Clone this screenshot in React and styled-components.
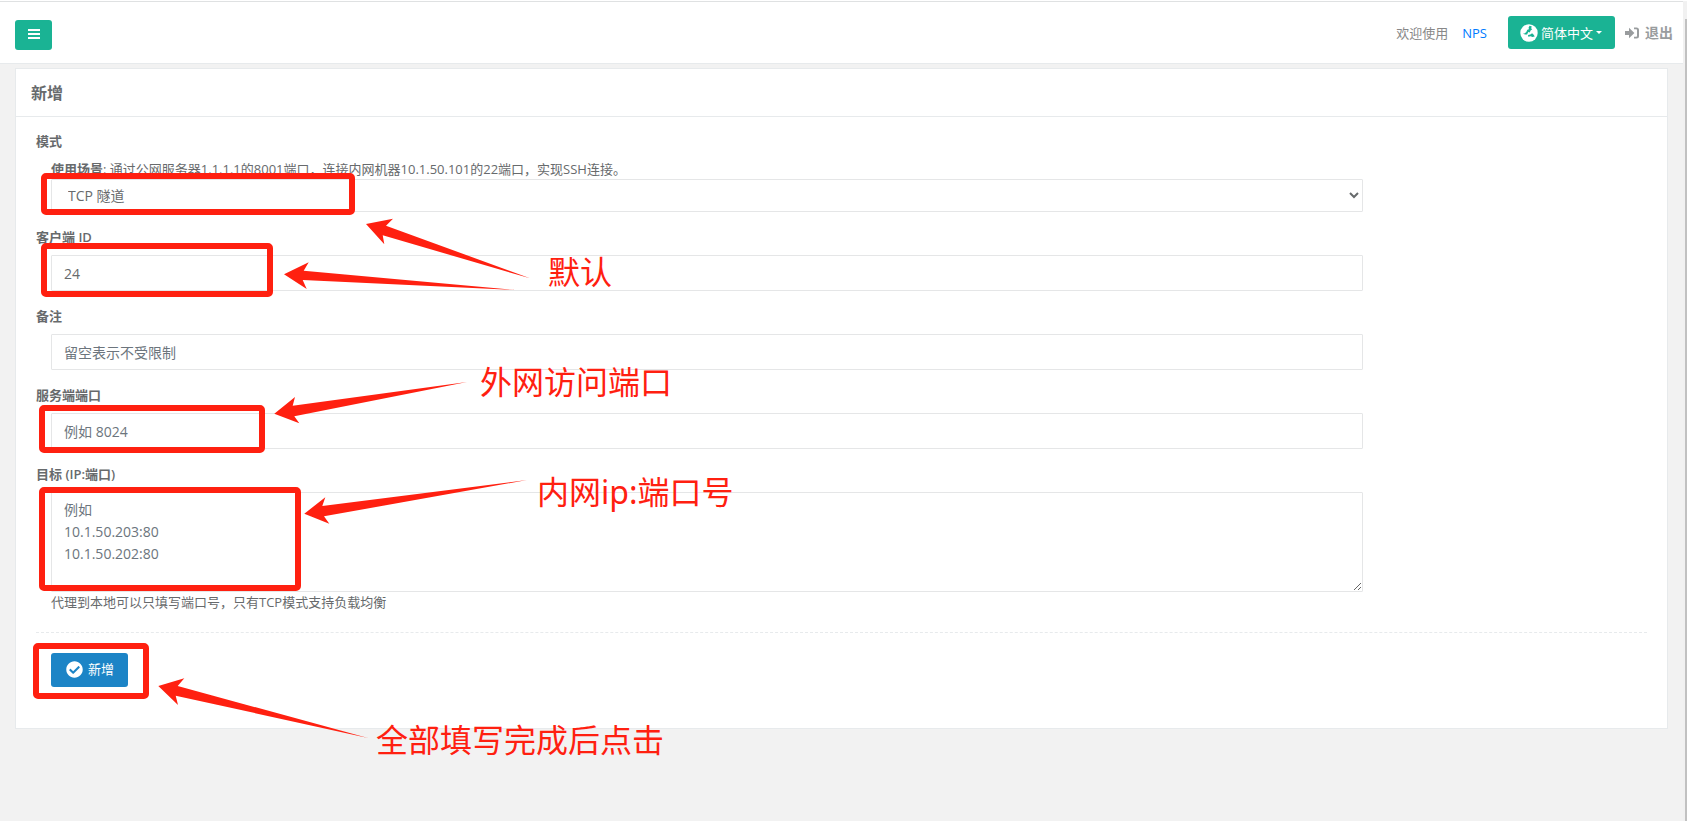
import React from 'react';
import styled, { createGlobalStyle } from 'styled-components';
import { FaCheckCircle } from 'react-icons/fa';

const Global = createGlobalStyle`
  * { box-sizing: border-box; }
  html, body { margin: 0; padding: 0; }
  body {
    background: #f2f2f2;
    color: #676a6c;
    font-family: "Open Sans", "Noto Sans CJK SC", sans-serif;
    font-size: 13px;
    line-height: 20px;
  }
  button, input, select, textarea { font-family: inherit; }
`;

const Page = styled.div`
  position: relative;
  display: flex;
  min-height: 100vh;
  overflow: hidden;
  background: #f2f2f2;
  border-top: 1px solid #fff;
`;

const Main = styled.div`
  flex: 1;
  min-width: 0;
`;

const ScrollTrack = styled.div`
  flex: none;
  width: 4px;
  margin-top: 1px;
  padding: 17px 0 0 2px;
  display: flex;
  background: #f1f1f1;
`;

const ScrollThumb = styled.div`
  flex: 1;
  background: #c1c1c1;
`;

const TopBar = styled.header`
  display: flex;
  align-items: center;
  justify-content: space-between;
  height: 63px;
  padding: 0 10px 0 15px;
  background: #fff;
  border-top: 1px solid #dfe1e2;
  border-bottom: 1px solid #e7eaec;
`;

const MenuButton = styled.button`
  display: flex;
  justify-content: center;
  width: 37px;
  height: 30px;
  margin-top: 4px;
  padding: 9px 0 0;
  background: #1ab394;
  border: 0;
  border-radius: 3px;
  color: #fff;
`;

const TopNav = styled.nav`
  display: flex;
  align-items: center;
`;

const Welcome = styled.span`
  margin-right: 14px;
  color: #888;
`;

const BrandLink = styled.a`
  margin-right: 21px;
  color: #007bff;
  text-decoration: none;
`;

const LanguageButton = styled.button`
  display: flex;
  align-items: center;
  gap: 3px;
  height: 33px;
  margin-right: 10px;
  padding: 0 13px 0 12px;
  background: #1ab394;
  border: 0;
  border-radius: 3px;
  color: #fff;
  font-size: 13px;
  line-height: 20px;
`;

const Caret = styled.span`
  border: 3px solid transparent;
  border-top-color: #fff;
  border-bottom: 0;
`;

const LogoutLink = styled.a`
  display: flex;
  align-items: center;
  gap: 6px;
  color: #999c9e;
  font-size: 14px;
  font-weight: 600;
  text-decoration: none;
`;

const Card = styled.section`
  margin: 4px 15px 0;
  background: #fff;
  border: 1px solid #e7eaec;
`;

const CardTitle = styled.h5`
  margin: 0;
  padding: 14px 15px 13px;
  border-bottom: 1px solid #e7eaec;
  font-size: 16px;
  line-height: 20px;
  font-weight: 600;
`;

const Form = styled.form`
  padding: 14px 20px 41px;
`;

const Group = styled.div`
  margin-bottom: 15px;
`;

const Label = styled.label`
  display: block;
  margin-bottom: 8px;
  font-weight: 600;
`;

const Field = styled.div`
  width: 83.3333%;
  padding: 0 15px;
`;

const Hint = styled.p`
  margin: 0;
`;

const controlStyle = `
  display: block;
  width: 100%;
  background: #fff;
  border: 1px solid #e5e6e7;
  border-radius: 1px;
  color: #676a6c;
  font-size: 14px;
  line-height: 22px;
  outline: 0;
  &::placeholder { color: #6c757d; opacity: 1; }
`;

const TextInput = styled.input`
  ${controlStyle}
  height: 36px;
  padding: 6px 12px;
`;

const Select = styled.select`
  ${controlStyle}
  height: 33px;
  padding: 0 0 0 12px;
`;

const TextArea = styled.textarea`
  ${controlStyle}
  height: 100px;
  padding: 6px 12px;
`;

const Divider = styled.hr`
  height: 0;
  margin: 20px 0;
  border: 0;
  border-top: 1px dashed #e7eaec;
`;

const SubmitButton = styled.button`
  display: flex;
  align-items: center;
  gap: 5px;
  width: 77px;
  height: 34px;
  margin-left: 15px;
  padding: 0 0 2px 15px;
  background: #1c84c6;
  border: 0;
  border-radius: 3px;
  color: #fff;
  font-size: 13px;
  line-height: 20px;
`;

const Marks = styled.div`
  position: absolute;
  inset: -1px 0 0;
  pointer-events: none;
`;

const Arrows = styled.svg`
  position: absolute;
  top: 0;
  left: 0;
  fill: #ff2010;
`;

const Frame = styled.div`
  position: absolute;
  left: ${(p) => p.$x}px;
  top: ${(p) => p.$y}px;
  width: ${(p) => p.$w}px;
  height: ${(p) => p.$h}px;
  border: 6px solid #ff2010;
  border-radius: 5px;
`;

const Note = styled.span`
  position: absolute;
  left: ${(p) => p.$x}px;
  top: ${(p) => p.$y}px;
  color: #ff2010;
  font-family: "Noto Sans", "Noto Sans CJK SC", sans-serif;
  font-size: 32px;
  line-height: 40px;
  white-space: nowrap;
`;

const frames = [
  [41, 173, 314, 42],
  [41, 243, 232, 54],
  [39, 405, 226, 48],
  [39, 487, 262, 104],
  [33, 643, 116, 56],
];

const arrows = [
  '366,224 393,218.7 386,225.7 530,278.3 382.7,235.3 384.3,244.3',
  '284,274.3 308.7,262.3 303.7,270.7 516,290 302.7,280 306.7,289',
  '274.3,413.7 295,397 292.7,405.7 467,382 294.3,416.3 299.3,423.3',
  '304.3,513.7 325.3,497.3 322.3,506 527,480 324,516.3 329.3,523.7',
  '158.3,686 184.3,678.3 177.7,686 368,738 175.7,695.7 178,705',
];

const notes = [
  ['默认', 548, 252],
  ['外网访问端口', 480, 362],
  ['内网ip:端口号', 537, 472],
  ['全部填写完成后点击', 376, 720],
];

export default function App() {
  return (
    <Page>
      <Global />
      <Main>
        <TopBar>
          <MenuButton type="button" aria-label="菜单">
            <svg width="12" height="10" viewBox="0 0 12 10" fill="currentColor">
              <path d="M0 0h12v2H0zM0 4h12v2H0zM0 8h12v2H0z" />
            </svg>
          </MenuButton>
          <TopNav>
            <Welcome>欢迎使用</Welcome>
            <BrandLink href="#">NPS</BrandLink>
            <LanguageButton type="button">
              <svg width="18" height="18" viewBox="0 0 18 18">
                <circle cx="9" cy="9" r="8.7" fill="#fff" />
                <path
                  d="M9.6 1.8l2.2.8-.7 1.7 1.1 1-1.6 1.2-.8 2-1.5-.5-1.2 2.4-2.3.2-1.9-1.4 1.6.2 1.8-1.4 1-2.2 1.6-.6-.3-1.6zM8 11l2.3-.5 1.8-1.3 1.6 1.5 1 1.8-2.4.5-1.6-.7-2.4.4z"
                  fill="#1ab394"
                />
              </svg>
              简体中文
              <Caret />
            </LanguageButton>
            <LogoutLink href="#">
              <svg width="14" height="12" viewBox="0 0 14 12" fill="currentColor">
                <path d="M0 4h4V.8L9.4 6 4 11.2V8H0z" />
                <path d="M9 .5h2.5A2.5 2.5 0 0 1 14 3v6a2.5 2.5 0 0 1-2.5 2.5H9v-1.8h2.3a.7.7 0 0 0 .7-.7V3a.7.7 0 0 0-.7-.7H9z" />
              </svg>
              退出
            </LogoutLink>
          </TopNav>
        </TopBar>
        <Card>
          <CardTitle>新增</CardTitle>
          <Form onSubmit={(e) => e.preventDefault()}>
            <Group>
              <Label htmlFor="mode">模式</Label>
              <Field>
                <Hint>
                  <b>使用场景</b>: 通过公网服务器1.1.1.1的8001端口，连接内网机器10.1.50.101的22端口，实现SSH连接。
                </Hint>
                <Select id="mode" defaultValue="tcp">
                  <option value="tcp">TCP 隧道</option>
                </Select>
              </Field>
            </Group>
            <Group>
              <Label htmlFor="client">客户端 ID</Label>
              <Field>
                <TextInput id="client" defaultValue="24" />
              </Field>
            </Group>
            <Group>
              <Label htmlFor="remark">备注</Label>
              <Field>
                <TextInput id="remark" placeholder="留空表示不受限制" />
              </Field>
            </Group>
            <Group>
              <Label htmlFor="port">服务端端口</Label>
              <Field>
                <TextInput id="port" placeholder="例如 8024" />
              </Field>
            </Group>
            <Group>
              <Label htmlFor="target">目标 (IP:端口)</Label>
              <Field>
                <TextArea id="target" placeholder={'例如\n10.1.50.203:80\n10.1.50.202:80'} />
                <Hint>代理到本地可以只填写端口号，只有TCP模式支持负载均衡</Hint>
              </Field>
            </Group>
            <Divider />
            <SubmitButton type="submit">
              <FaCheckCircle size={17} />
              新增
            </SubmitButton>
          </Form>
        </Card>
      </Main>
      <ScrollTrack>
        <ScrollThumb />
      </ScrollTrack>
      <Marks>
        {frames.map(([x, y, w, h]) => (
          <Frame key={y} $x={x} $y={y} $w={w} $h={h} />
        ))}
        <Arrows width="700" height="800">
          {arrows.map((points) => (
            <polygon key={points} points={points} />
          ))}
        </Arrows>
        {notes.map(([text, x, y]) => (
          <Note key={text} $x={x} $y={y}>{text}</Note>
        ))}
      </Marks>
    </Page>
  );
}
